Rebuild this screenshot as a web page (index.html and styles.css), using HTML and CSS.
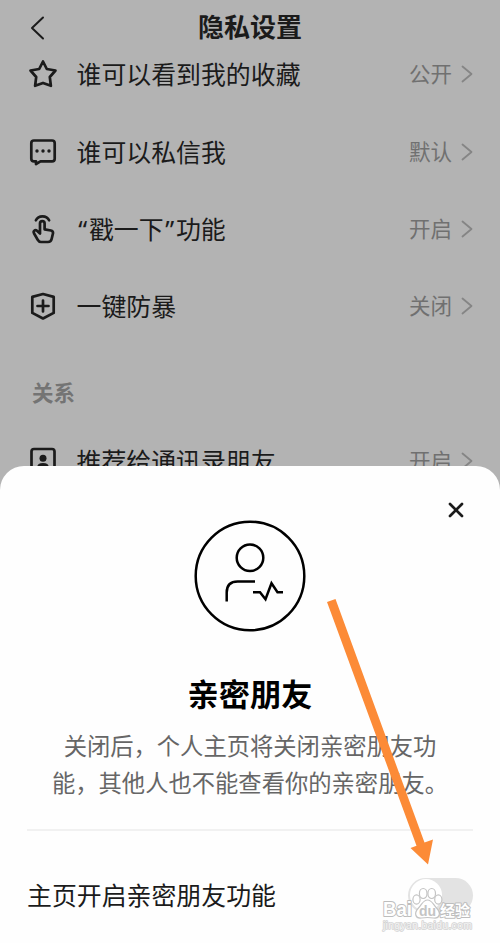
FILE: index.html
```html
<!DOCTYPE html>
<html lang="zh-CN">
<head>
    <meta charset="UTF-8">
    <meta name="viewport" content="width=device-width, initial-scale=1.0">
    <title>隐私设置</title>
    <link rel="stylesheet" href="styles.css">
</head>
<body>
    <div class="screen">
        <header class="header">
            <svg class="back" viewBox="0 0 16 26"><path d="M14 2.5 3 13l11 10.5"/></svg>
            <h1>隐私设置</h1>
        </header>

        <ul class="list">
            <li class="row">
                <svg class="icon" viewBox="0 0 30 30"><path d="M15 2.500 18.800 10 27.500 11.500 21.800 18 22.900 26.800 15 23.900 7.100 26.800 8.200 18 2.500 11.500 11.200 10Z"/></svg>
                <span class="name">谁可以看到我的收藏</span>
                <span class="value">公开</span>
                <svg class="chevron" viewBox="0 0 12 18"><path d="m1.5 1.5 9 7.5-9 7.5"/></svg>
            </li>
            <li class="row">
                <svg class="icon" viewBox="0 0 30 30"><path d="M6 3.500h18q2.700 0 2.700 2.700v15.500q0 2.700-2.700 2.700H12.500L8 27V24.400H6q-2.700 0-2.700-2.700V6.200Q3.300 3.500 6 3.500Z"/><g class="fill"><circle cx="9" cy="14" r="1.700"/><circle cx="15" cy="14" r="1.700"/><circle cx="21" cy="14" r="1.700"/></g></svg>
                <span class="name">谁可以私信我</span>
                <span class="value">默认</span>
                <svg class="chevron" viewBox="0 0 12 18"><path d="m1.5 1.5 9 7.5-9 7.5"/></svg>
            </li>
            <li class="row">
                <svg class="icon" viewBox="0 0 30 30"><path d="M7.900 6.300a7.200 6.700 0 0 1 13.200 0"/><path d="M12 19.500V9.500a2.300 2.300 0 0 1 4.600 0v5.800l6.300 1.200q2.400.5 2.100 2.800l-1.300 5.400q-.8 3.300-3.700 3.300h-7q-2 0-3.300-2.200l-3.600-6.300q-1-2 .3-2.900 1.200-.9 2.600.2l3 2.700"/></svg>
                <span class="name"><span class="quote">“</span>戳一下<span class="quote">”</span>功能</span>
                <span class="value">开启</span>
                <svg class="chevron" viewBox="0 0 12 18"><path d="m1.5 1.5 9 7.5-9 7.5"/></svg>
            </li>
            <li class="row">
                <svg class="icon" viewBox="0 0 30 30"><path d="m15 3 10.700 2.900v16L15 27.500 4.300 21.900v-16Z"/><path d="M15 9.500v11M9.500 15h11"/></svg>
                <span class="name">一键防暴</span>
                <span class="value">关闭</span>
                <svg class="chevron" viewBox="0 0 12 18"><path d="m1.5 1.5 9 7.5-9 7.5"/></svg>
            </li>
            <li class="section">关系</li>
            <li class="row">
                <svg class="icon" viewBox="0 0 30 30"><path d="M6 3h18q2.500 0 2.500 2.500v22H3.500v-22Q3.500 3 6 3Z"/><circle class="fill" cx="15" cy="12.300" r="3.500"/><path class="fill" d="M9.300 21q0-4 5.700-4t5.700 4Z"/></svg>
                <span class="name">推荐给通讯录朋友</span>
                <span class="value">开启</span>
                <svg class="chevron" viewBox="0 0 12 18"><path d="m1.5 1.5 9 7.5-9 7.5"/></svg>
            </li>
        </ul>

        <!-- bottom sheet -->
        <section class="sheet">
            <div class="sheet-top">
                <svg class="close" viewBox="0 0 16 16"><path d="m2 2 12 12M14 2 2 14"/></svg>
            </div>
            <svg class="friend" viewBox="0 0 112 112">
                <circle cx="56" cy="56" r="54.300"/>
                <circle cx="56" cy="37.700" r="13.300"/>
                <path d="M32.700 81.500v-9q0-11 11-11H61"/>
                <path d="M59 72.300h7l5.500 7 6-16 6 9h5.500"/>
            </svg>
            <h2>亲密朋友</h2>
            <p class="desc">关闭后，个人主页将关闭亲密朋友功<br>能，其他人也不能查看你的亲密朋友。</p>
            <div class="switch-row">
                <span>主页开启亲密朋友功能</span>
                <div class="switch"><div class="knob"></div></div>
            </div>
        </section>

        <svg class="arrow" viewBox="0 0 110 270"><path d="M7 4 15.500 1 104.500 244.500 113 241.500 108 266.500 90.500 250 96.500 247.800Z"/></svg>

        <div class="watermark">
            <svg viewBox="0 0 100 64">
                <g class="paw">
                    <path d="M49.500 20c4.500 0 5.500 4.500 9 8 5 5 3 11-3 10q-6-1-12 0c-6 1-8-5-3-10 3.500-3.500 4.500-8 9-8Z"/>
                    <ellipse cx="38.500" cy="19.500" rx="3.600" ry="4.600"/>
                    <ellipse cx="45.200" cy="13.500" rx="3.800" ry="5"/>
                    <ellipse cx="53.700" cy="13.500" rx="3.800" ry="5"/>
                    <ellipse cx="60.300" cy="19.500" rx="3.600" ry="4.600"/>
                </g>
                <text class="bai" x="5" y="36.300" textLength="29" lengthAdjust="spacingAndGlyphs">Bai</text>
                <text class="du" x="41" y="35.500" textLength="17">du</text>
                <text class="jy" x="62" y="36" textLength="30" lengthAdjust="spacingAndGlyphs">经验</text>
                <text class="site" x="5" y="49" textLength="89">jingyan.baidu.com</text>
            </svg>
        </div>
    </div>
</body>
</html>
```

FILE: styles.css
```css
body {
    margin: 0;
    font-family: "Noto Sans CJK SC", sans-serif;
    color: #1b1b1b;
}

h1, h2, p, ul {
    margin: 0;
    padding: 0;
}

svg {
    display: block;
    flex: none;
    fill: none;
    stroke: currentColor;
    stroke-linecap: round;
    stroke-linejoin: round;
}

.screen {
    position: relative;
    height: 943px;
    overflow: hidden;
    background: #b3b3b3;
}

.header {
    display: grid;
    grid-template-columns: 50px 1fr 50px;
    align-items: center;
    height: 54px;
}

.back {
    width: 16px;
    height: 26px;
    margin: 2px 0 0 29px;
    stroke-width: 2;
}

h1 {
    padding-bottom: 2px;
    font-size: 26px;
    line-height: 34px;
    font-weight: 700;
    text-align: center;
}

/* the list is scrolled a little under the header */
.list {
    margin-top: -18.5px;
    list-style: none;
}

.row {
    display: flex;
    align-items: center;
    height: 77.4px;
    padding: 0 27px 0 28px;
}

.icon {
    width: 30px;
    height: 30px;
    stroke-width: 2.7;
}

.fill {
    fill: currentColor;
    stroke: none;
}

.name {
    flex: 1;
    margin-left: 18.5px;
    padding-bottom: 2px;
    font-size: 24.9px;
    line-height: 36px;
}

.quote {
    display: inline-block;
    width: 12.4px;
    font-family: "Noto Sans", sans-serif;
    line-height: 1;
    text-align: center;
}

.value {
    padding-bottom: 2px;
    font-size: 21.5px;
    line-height: 32px;
    color: #707070;
}

.chevron {
    width: 12px;
    height: 18px;
    margin-left: 9px;
    stroke-width: 1.8;
    color: #858585;
}

.section {
    box-sizing: border-box;
    height: 77.4px;
    padding: 32px 32px 0;
    font-size: 21.5px;
    line-height: 30px;
    font-weight: 700;
    color: #747474;
}

.sheet {
    position: absolute;
    left: 0;
    right: 0;
    bottom: 0;
    box-sizing: border-box;
    height: 477.5px;
    padding: 0 27px;
    border-radius: 24px 24px 0 0;
    background: #fefefe;
    text-align: center;
}

.sheet-top {
    display: flex;
    justify-content: flex-end;
    height: 54.5px;
    padding: 36px 9px 0;
    box-sizing: border-box;
}

.close {
    width: 16px;
    height: 16px;
    stroke-width: 2.7;
}

.friend {
    width: 112px;
    height: 112px;
    margin: 0 auto;
    color: #000;
    stroke-width: 2.5;
    stroke-linecap: butt;
    stroke-linejoin: miter;
}

h2 {
    margin-top: 39px;
    font-size: 31.2px;
    line-height: 44px;
    font-weight: 700;
    color: #000;
}

.desc {
    margin: 12px -10px 0;
    font-size: 23.3px;
    line-height: 36.5px;
    color: #666;
    white-space: nowrap;
}

.switch-row {
    display: flex;
    align-items: center;
    justify-content: space-between;
    height: 130px;
    margin-top: 29px;
    border-top: 2px solid #f1f1f1;
    font-size: 24.9px;
}

.switch-row span {
    padding-bottom: 4px;
}

.switch {
    box-sizing: border-box;
    width: 65px;
    height: 35px;
    margin-bottom: 2px;
    padding: 1.5px;
    border-radius: 18px;
    background: #e3e3e3;
}

.knob {
    width: 32px;
    height: 32px;
    border-radius: 50%;
    background: #fff;
}

.arrow {
    position: absolute;
    left: 320px;
    top: 598px;
    width: 110px;
    height: 270px;
    overflow: visible;
    fill: #fc8b37;
    stroke: none;
}

.watermark {
    position: absolute;
    left: 378px;
    top: 880px;
    width: 100px;
    height: 63px;
}

.watermark svg {
    width: 100px;
    height: 64px;
    fill: #fff;
    stroke: #c4c4c4;
    stroke-width: 1.2;
}

.watermark text {
    font-family: "Liberation Sans", sans-serif;
    font-weight: 700;
    paint-order: stroke;
    stroke-width: 2;
}

.watermark .bai {
    font-size: 20px;
    stroke: #bdbdbd;
}

.watermark .du {
    font-size: 14px;
    fill: #c4c4c4;
    stroke: none;
}

.watermark .jy {
    font-family: "Noto Sans CJK SC", sans-serif;
    font-size: 15px;
    stroke: #bdbdbd;
}

.watermark .site {
    font-size: 10.5px;
    font-weight: 400;
    fill: #f4f4f4;
    stroke: #d3d3d3;
    stroke-width: 1.6;
}
```
